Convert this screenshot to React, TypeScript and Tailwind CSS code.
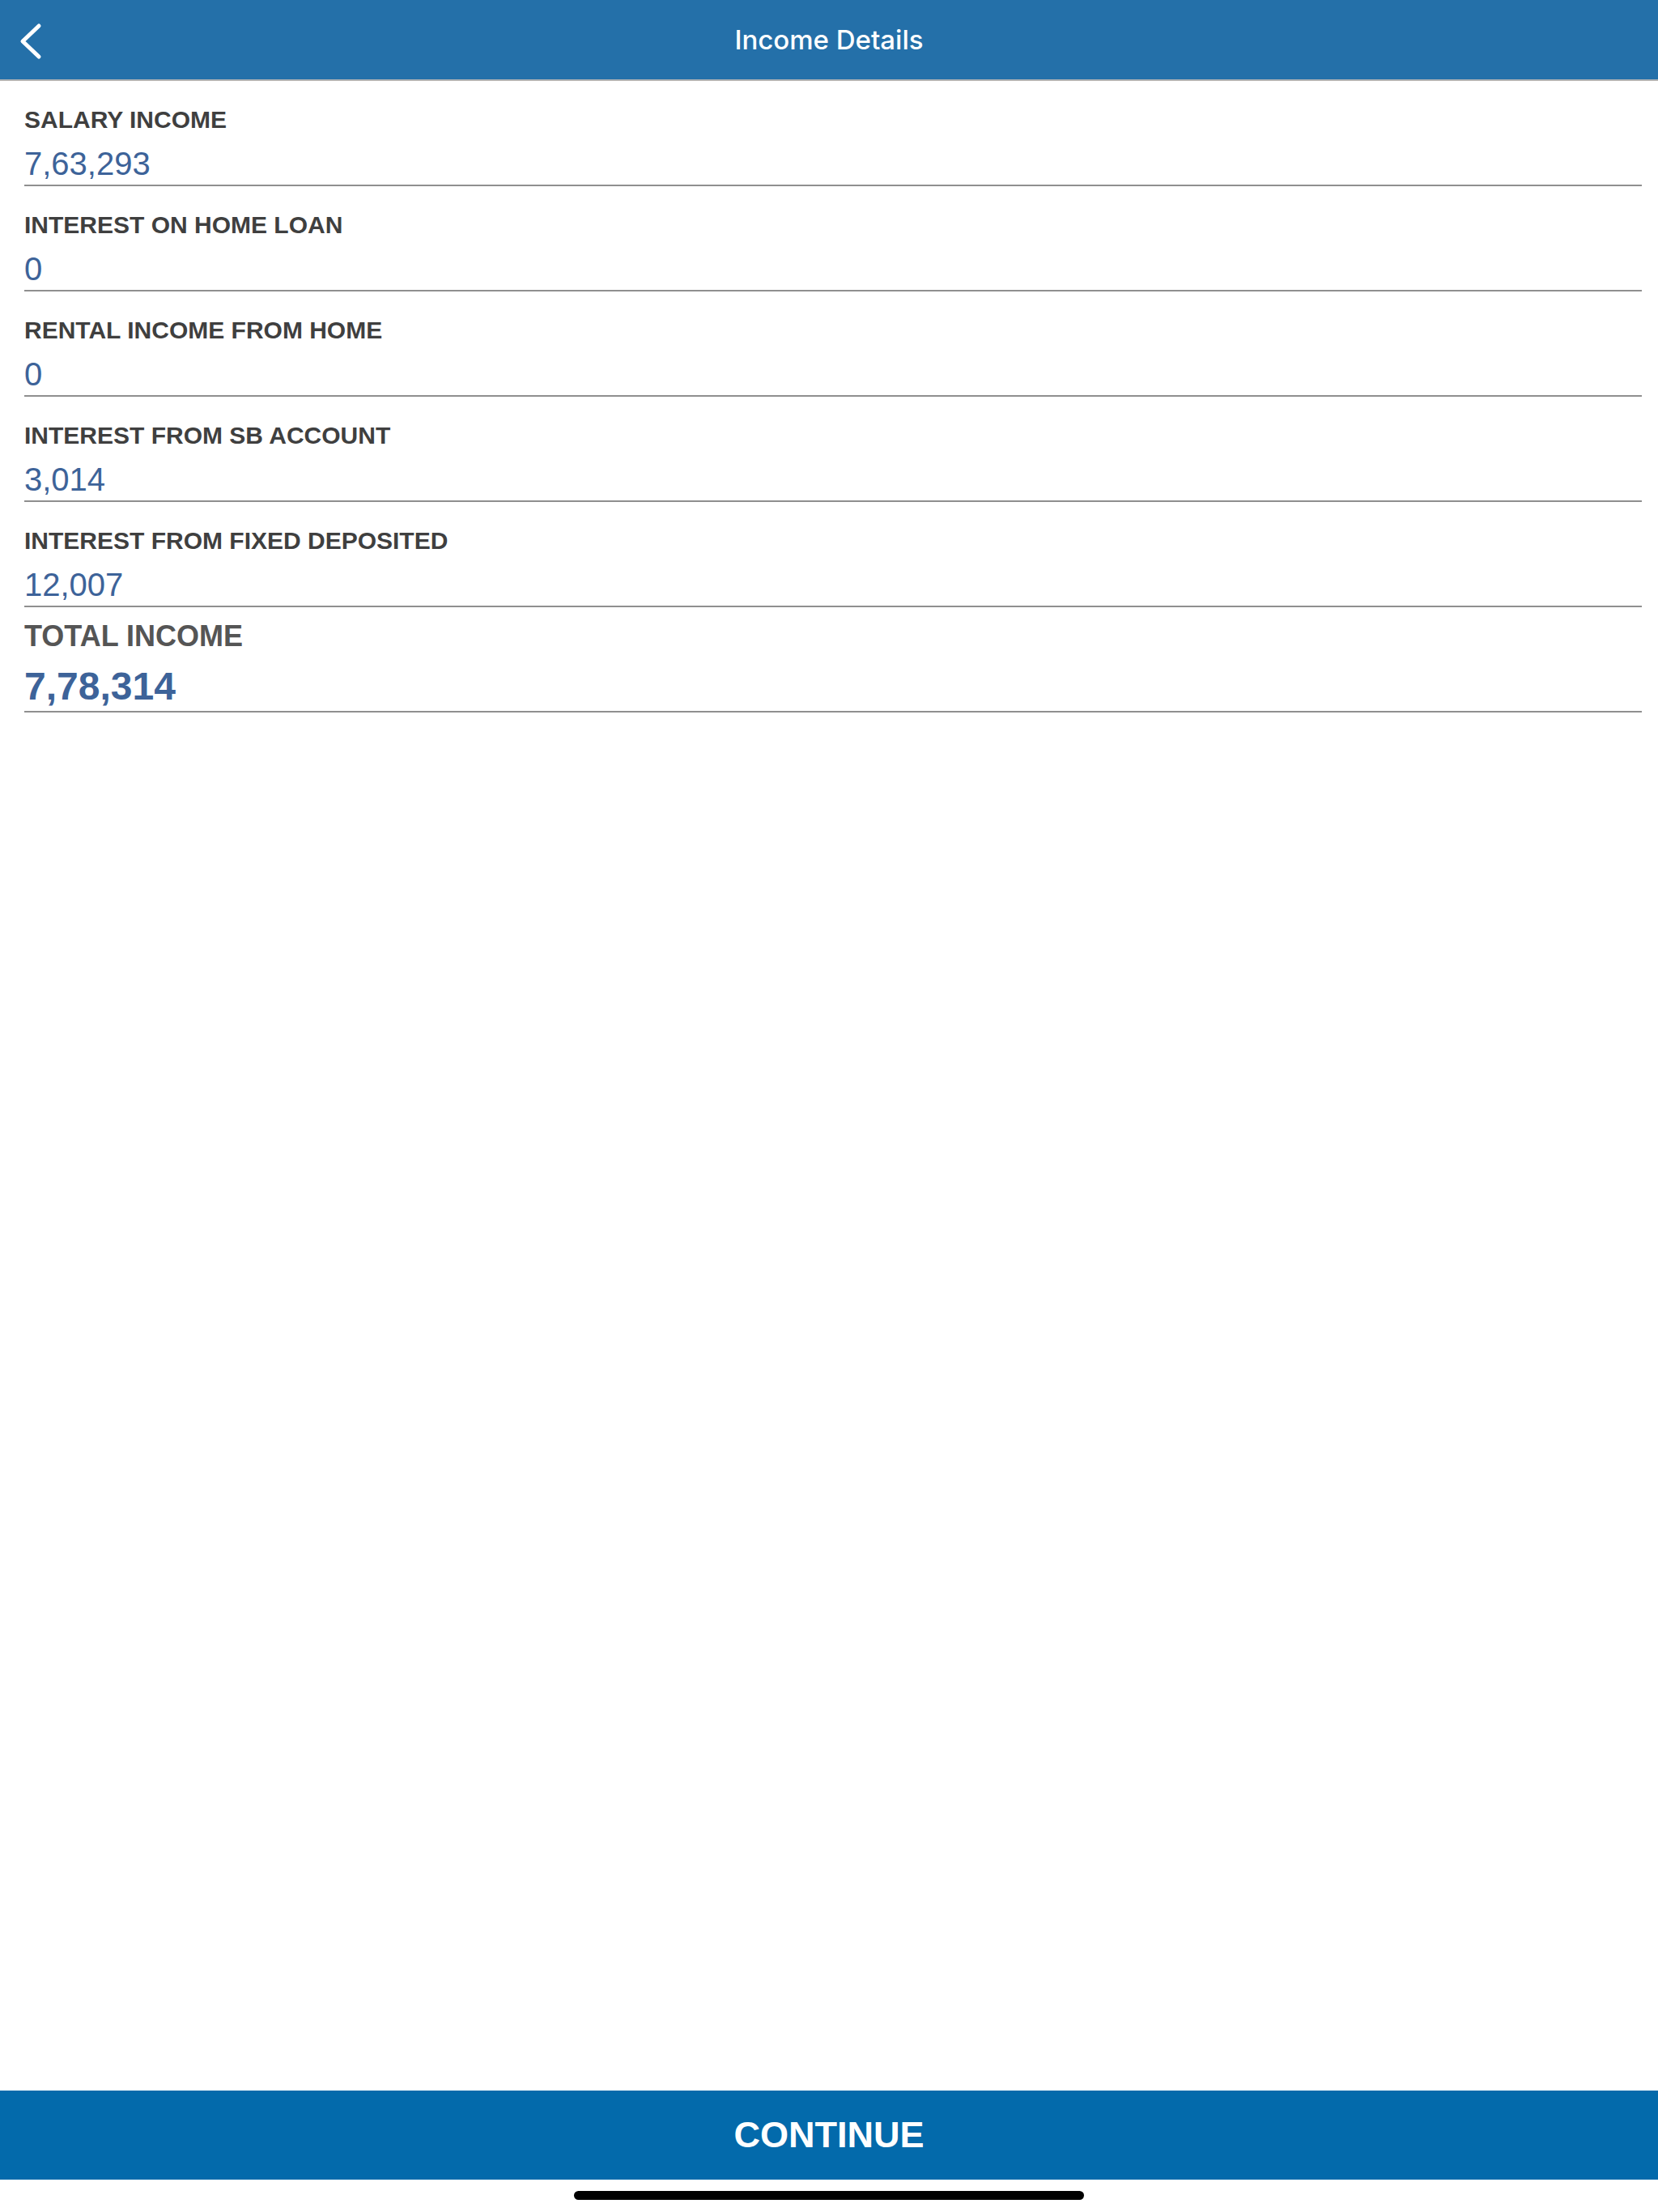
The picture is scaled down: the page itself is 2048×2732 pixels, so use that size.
const incomes = [
  { label: "SALARY INCOME", value: "7,63,293" },
  { label: "INTEREST ON HOME LOAN", value: "0" },
  { label: "RENTAL INCOME FROM HOME", value: "0" },
  { label: "INTEREST FROM SB ACCOUNT", value: "3,014" },
  { label: "INTEREST FROM FIXED DEPOSITED", value: "12,007" },
];

function BackIcon() {
  return (
    <svg width="32" height="48" viewBox="0 0 32 48" fill="none">
      <polyline
        points="26,5 6,24 26,43"
        stroke="white"
        strokeWidth="5"
        strokeLinecap="round"
        strokeLinejoin="round"
      />
    </svg>
  );
}

function IncomeRow({ label, value }: { label: string; value: string }) {
  return (
    <div className="border-b-2 border-[#8f8f8f] pt-[30px] pb-[2px]">
      <div className="text-[30px] leading-[36px] font-bold text-[#3f3f3f]">
        {label}
      </div>
      <div className="mt-[12px] text-[40px] leading-[48px] text-[#3d6399]">
        {value}
      </div>
    </div>
  );
}

export default function App() {
  return (
    <div className="flex h-screen flex-col bg-white font-['Liberation_Sans',Arial,sans-serif]">
      <header className="relative flex h-[100px] items-center justify-center border-b-2 border-[#b4b4b4] bg-[#2470a9]">
        <button className="absolute left-[22px] top-[27px]">
          <BackIcon />
        </button>
        <h1 className="pt-[2px] font-['Inter',sans-serif] text-[33px] font-medium text-white">
          Income Details
        </h1>
      </header>

      <div className="pl-[30px] pr-[20px]">
        {incomes.map((item) => (
          <IncomeRow key={item.label} label={item.label} value={item.value} />
        ))}
        <div className="border-b-2 border-[#8f8f8f] pt-[16px] pb-[3px]">
          <div className="text-[36px] leading-[40px] font-bold text-[#555555]">
            TOTAL INCOME
          </div>
          <div className="mt-[15px] text-[48px] leading-[54px] font-bold text-[#3d6399]">
            7,78,314
          </div>
        </div>
      </div>

      <div className="flex-1" />

      <button className="flex h-[110px] w-full items-center justify-center bg-[#036aab] text-[45px] font-bold text-white">
        CONTINUE
      </button>
      <div className="flex h-[40px] justify-center pt-[14px]">
        <div className="h-[11px] w-[630px] rounded-full bg-black" />
      </div>
    </div>
  );
}
